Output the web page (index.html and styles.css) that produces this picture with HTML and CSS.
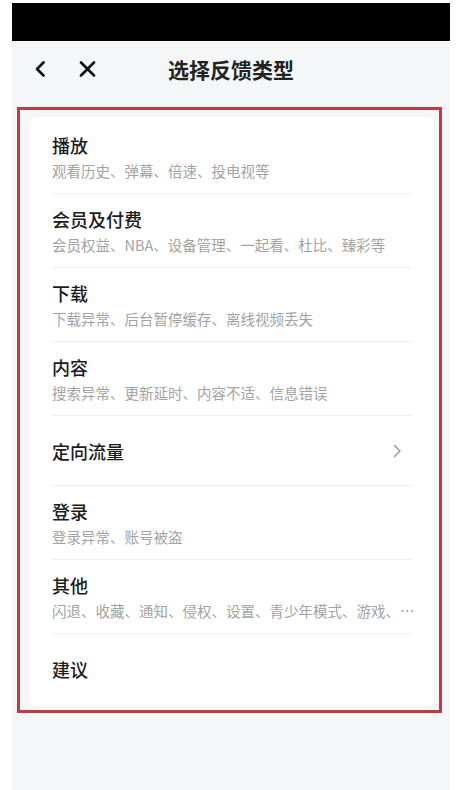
FILE: index.html
```html
<!DOCTYPE html>
<html lang="zh-CN">
<head>
<meta charset="utf-8">
<title>选择反馈类型</title>
<link rel="stylesheet" href="styles.css">
</head>
<body>
<div class="app">
  <div class="status"></div>
  <div class="nav">
    <div class="nav-icons">
      <svg class="ic-back" width="12" height="16" viewBox="0 0 12 16"><path d="M9.5 1.5 L3 8 L9.5 14.5" fill="none" stroke="#111" stroke-width="2.6" stroke-linecap="round" stroke-linejoin="round"/></svg>
      <svg class="ic-close" width="17" height="16" viewBox="0 0 17 16"><path d="M2 1.5 L15 14.5 M15 1.5 L2 14.5" fill="none" stroke="#111" stroke-width="2.6" stroke-linecap="round"/></svg>
    </div>
    <div class="nav-title">选择反馈类型</div>
  </div>
  <div class="frame">
    <div class="card">
      <div class="row">
        <div class="row-title">播放</div>
        <div class="row-sub">观看历史、弹幕、倍速、投电视等</div>
      </div>
      <div class="row">
        <div class="row-title">会员及付费</div>
        <div class="row-sub">会员权益、NBA、设备管理、一起看、杜比、臻彩等</div>
      </div>
      <div class="row">
        <div class="row-title">下载</div>
        <div class="row-sub">下载异常、后台暂停缓存、离线视频丢失</div>
      </div>
      <div class="row">
        <div class="row-title">内容</div>
        <div class="row-sub">搜索异常、更新延时、内容不适、信息错误</div>
      </div>
      <div class="row row-single">
        <div class="row-title">定向流量</div>
        <svg class="chev" width="9" height="14" viewBox="0 0 9 14"><path d="M1.5 1.5 L7 7 L1.5 12.5" fill="none" stroke="#9a9a9a" stroke-width="1.5" stroke-linecap="round" stroke-linejoin="round"/></svg>
      </div>
      <div class="row">
        <div class="row-title">登录</div>
        <div class="row-sub">登录异常、账号被盗</div>
      </div>
      <div class="row">
        <div class="row-title">其他</div>
        <div class="row-sub">闪退、收藏、通知、侵权、设置、青少年模式、游戏、…</div>
      </div>
      <div class="row row-single row-last">
        <div class="row-title">建议</div>
      </div>
    </div>
  </div>
</div>
</body>
</html>
```
FILE: styles.css
```css
html, body {
  margin: 0;
  padding: 0;
  background: #ffffff;
}
body {
  font-family: "Noto Sans CJK SC", "Noto Sans", sans-serif;
  color: #1c1c1c;
}
.app {
  margin: 3px 0 0 12px;
  width: 438px;
  height: 787px;
  background: #f5f6f8;
  overflow: hidden;
}
.status {
  height: 38px;
  background: #000;
}
.nav {
  position: relative;
  height: 56px;
  display: flex;
  align-items: center;
  justify-content: center;
}
.nav-icons {
  position: absolute;
  left: 22px;
  top: 20px;
  display: flex;
  align-items: center;
  gap: 33px;
}
.nav-title {
  font-size: 21px;
  font-weight: 700;
  color: #222;
  line-height: 28px;
}
.frame {
  box-sizing: border-box;
  margin: 10px 0 0 5px;
  width: 425px;
  border: 3px solid #bf3a43;
  padding: 7px 5px 4px 9px;
}
.card {
  background: #fff;
  border-radius: 8px;
  padding: 3px 22px 0 23px;
}
.row {
  padding: 13px 0 12px;
  border-bottom: 1px solid #f0f0f2;
  display: flex;
  flex-direction: column;
  gap: 4px;
}
.row-single {
  flex-direction: row;
  align-items: center;
  justify-content: space-between;
  padding: 23px 0 22px;
}
.row-last {
  border-bottom: none;
  padding-bottom: 25px;
}
.row-title {
  font-size: 18px;
  line-height: 24px;
  font-weight: 500;
  color: #1c1c1c;
}
.row-sub {
  font-size: 14.5px;
  line-height: 20px;
  color: #a3a3a3;
  white-space: nowrap;
}
.chev {
  margin-right: 10px;
}
```
